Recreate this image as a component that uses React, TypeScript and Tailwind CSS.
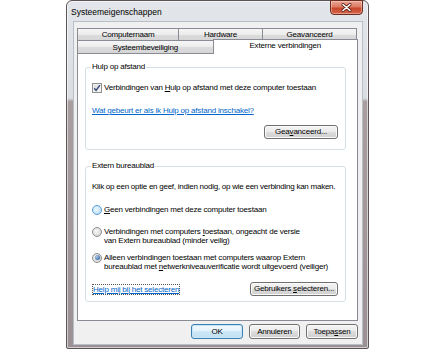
import React from "react";

function Btn({ children, className = "" }: { children: React.ReactNode; className?: string }) {
  return (
    <div
      className={`flex h-[14px] items-center justify-center whitespace-nowrap rounded-[3px] border border-[#707070] bg-[linear-gradient(180deg,#f3f3f3_0%,#ebebeb_50%,#dddddd_50%,#cfcfcf_100%)] shadow-[inset_0_0_0_1px_#fbfbfb] ${className}`}
    >
      {children}
    </div>
  );
}

const tabBg =
  "bg-[linear-gradient(180deg,#f6f6f6_0%,#ececec_50%,#dcdcdc_51%,#d6d6d6_100%)]";

export default function App() {
  return (
    <div className="h-[350px] w-[435px] whitespace-nowrap bg-white font-['Liberation_Sans',Arial,sans-serif] text-[8px] leading-[10px] tracking-[-0.2px] text-black">
      <div className="ml-[66px] flex h-[349px] w-[303px] flex-col rounded-t-[6px] rounded-b-[2px] border border-[#5d5457] bg-[linear-gradient(180deg,#e2e5e9_0%,#dadee3_28%,#a89ea0_29%,#9b9093_100%)] shadow-[inset_0_0_0_1px_rgba(255,255,255,0.55)]">
        {/* title bar */}
        <div className="flex h-[20px] items-start justify-between pl-[4px] pr-[5px]">
          <span className="mt-[6px] text-[8.5px] tracking-normal text-black">Systeemeigenschappen</span>
          <div className="-mt-px flex h-[15px] w-[33px] items-center justify-center rounded-b-[4px] border border-[#6a2d22] bg-[linear-gradient(180deg,#eba695_0%,#dc7a62_45%,#c9472c_55%,#d2664a_100%)] shadow-[inset_0_0_0_1px_rgba(255,220,210,0.45)]">
            <svg width="11" height="9" viewBox="0 0 11 9">
              <path d="M2 1.5 L9 7.5 M9 1.5 L2 7.5" stroke="#5a2218" strokeWidth="3" strokeLinecap="round" />
              <path d="M2 1.5 L9 7.5 M9 1.5 L2 7.5" stroke="#ffffff" strokeWidth="1.6" strokeLinecap="round" />
            </svg>
          </div>
        </div>
        {/* body */}
        <div className="mx-[5px] mb-[3px] ml-[6px] flex flex-1 flex-col border border-[#b9bfc6] bg-[#f0f0f0] pb-[5px] pl-[3px] pr-[4px] pt-[6px]">
          {/* tabs row 1 */}
          <div className="flex h-[12px]">
            <div className={`flex h-[12px] w-[102px] items-center justify-center border-x border-t border-[#898c95] ${tabBg}`}>Computernaam</div>
            <div className={`-ml-px flex h-[12px] w-[85px] items-center justify-center border-x border-t border-[#898c95] ${tabBg}`}>Hardware</div>
            <div className={`-ml-px flex h-[12px] w-[95px] items-center justify-center border-x border-t border-[#898c95] ${tabBg}`}>Geavanceerd</div>
          </div>
          {/* tabs row 2 */}
          <div className="flex h-[13px] items-start">
            <div className={`flex h-[13px] w-[137px] items-start justify-center border-x border-t border-[#898c95] pt-[2px] ${tabBg}`}>Systeembeveiliging</div>
            <div className="relative z-10 -ml-px -mt-px flex h-[15px] w-[146px] items-start justify-center border-x border-t border-[#898c95] bg-white pt-[1px]">
              Externe verbindingen
            </div>
          </div>
          {/* panel */}
          <div className="flex flex-1 flex-col border border-[#898c95] bg-white pl-[7px] pt-[13px]">
            {/* group 1 */}
            <div className="flex w-[261px] flex-col rounded-[3px] border border-[#d5dfe5] pb-[10px] pl-[6px] pr-[7px]">
              <div className="-mt-[6px] -ml-px self-start bg-white px-[1px]">Hulp op afstand</div>
              <div className="mt-[11px] flex h-[10px] items-center gap-[2px]">
                <div className="flex h-[10px] w-[10px] items-center justify-center border border-[#8e8f8f] bg-[linear-gradient(135deg,#d8d8d8,#f8f8f8)] shadow-[inset_0_0_0_1px_#f2f2f2]">
                  <svg width="8" height="8" viewBox="0 0 8 8">
                    <path d="M1.2 4.2 L3.1 6.4 L6.9 1.2" stroke="#33467a" strokeWidth="1.4" fill="none" />
                  </svg>
                </div>
                <span>
                  Verbindingen van <span className="underline">H</span>ulp op afstand met deze computer toestaan
                </span>
              </div>
              <div className="mt-[13px] flex h-[10px] items-center">
                <span className="text-[#0066cc] underline">Wat gebeurt er als ik Hulp op afstand inschakel?</span>
              </div>
              <div className="mt-[9px] flex justify-end">
                <Btn className="w-[74px]">
                  <span>
                    Gea<span className="underline">v</span>anceerd...
                  </span>
                </Btn>
              </div>
            </div>
            {/* group 2 */}
            <div className="mt-[16px] flex w-[261px] flex-col rounded-[3px] border border-[#d5dfe5] pb-[5px] pl-[6px] pr-[7px]">
              <div className="-mt-[6px] -ml-px self-start bg-white px-[1px]">Extern bureaublad</div>
              <div className="mt-[11px] flex h-[10px] items-center tracking-[-0.25px]">
                Klik op een optie en geef, indien nodig, op wie een verbinding kan maken.
              </div>
              <div className="mt-[13px] flex h-[10px] items-center gap-[2px]">
                <div className="h-[10px] w-[10px] rounded-full border border-[#5b9bd0] bg-[radial-gradient(circle_at_40%_40%,#eef8fe,#a9d8f5)]" />
                <span>
                  <span className="underline">G</span>een verbindingen met deze computer toestaan
                </span>
              </div>
              <div className="mt-[12px] flex items-start gap-[2px] leading-[9px]">
                <div className="mt-[-0.5px] h-[10px] w-[10px] shrink-0 rounded-full border border-[#8e8f8f] bg-[radial-gradient(circle_at_40%_40%,#f8f8f8,#cdcdcd)]" />
                <span>
                  Verbindingen met computers <span className="underline">t</span>oestaan, ongeacht de versie
                  <br />
                  van Extern bureaublad (minder veilig)
                </span>
              </div>
              <div className="mt-[8px] flex items-start gap-[2px] leading-[9px]">
                <div className="mt-[-0.5px] flex h-[10px] w-[10px] shrink-0 items-center justify-center rounded-full border border-[#8e8f8f] bg-[radial-gradient(circle_at_40%_40%,#f8f8f8,#cdcdcd)]">
                  <div className="h-[5px] w-[5px] rounded-full bg-[radial-gradient(circle_at_35%_35%,#a9cdee,#1d4b8c)]" />
                </div>
                <span>
                  Alleen verbindingen toestaan met computers waarop Extern
                  <br />
                  bureaublad met <span className="underline">n</span>etwerkniveauverificatie wordt uitgevoerd (veiliger)
                </span>
              </div>
              <div className="mt-[11px] flex h-[14px] items-center justify-between">
                <span className="border border-dotted border-[#555] leading-[9px] text-[#0066cc] underline">Help mij bij het selecteren</span>
                <Btn className="w-[88px]">
                  <span>
                    Gebruikers <span className="underline">s</span>electeren...
                  </span>
                </Btn>
              </div>
            </div>
          </div>
          {/* bottom buttons */}
          <div className="mt-[3px] flex h-[15px] justify-end gap-[6px]">
            <div className="flex h-[15px] w-[52px] items-center justify-center rounded-[3px] border border-[#3c7fb1] bg-[linear-gradient(180deg,#f2f9fd_0%,#e3f2fb_50%,#cfe8f7_50%,#bfe0f4_100%)] shadow-[inset_0_0_0_1px_#c6e5f9]">
              OK
            </div>
            <Btn className="h-[15px] w-[51px]">Annuleren</Btn>
            <Btn className="h-[15px] w-[52px]">
              <span>
                Toepa<span className="underline">s</span>sen
              </span>
            </Btn>
          </div>
        </div>
      </div>
    </div>
  );
}
